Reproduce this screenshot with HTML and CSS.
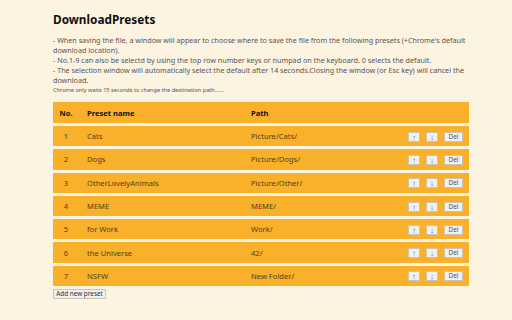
FILE: index.html
```html
<!DOCTYPE html>
<html>
<head>
<meta charset="utf-8">
<link rel="stylesheet" href="styles.css">
</head>
<body>
<main class="page">
  <h1 class="title">DownloadPresets</h1>
  <div class="notes">
    <p>- When saving the file, a window will appear to choose where to save the file from the following presets (+Chrome's default download location).</p>
    <p>- No.1-9 can also be selectd by using the top row number keys or numpad on the keyboard. 0 selects the default.</p>
    <p>- The selection window will automatically select the default after 14 seconds.Closing the window (or Esc key) will cancel the download.</p>
    <p class="small">Chrome only waits 15 seconds to change the destination path......</p>
  </div>
  <table class="presets">
    <thead>
      <tr><th class="c-no">No.</th><th class="c-name">Preset name</th><th class="c-path">Path</th><th class="c-act"></th></tr>
    </thead>
    <tbody>
      <tr><td class="c-no">1</td><td class="c-name">Cats</td><td class="c-path">Picture/Cats/</td><td class="c-act"><button class="btn arr">↑</button><button class="btn arr">↓</button><button class="btn del">Del</button></td></tr>
      <tr><td class="c-no">2</td><td class="c-name">Dogs</td><td class="c-path">Picture/Dogs/</td><td class="c-act"><button class="btn arr">↑</button><button class="btn arr">↓</button><button class="btn del">Del</button></td></tr>
      <tr><td class="c-no">3</td><td class="c-name">OtherLovelyAnimals</td><td class="c-path">Picture/Other/</td><td class="c-act"><button class="btn arr">↑</button><button class="btn arr">↓</button><button class="btn del">Del</button></td></tr>
      <tr><td class="c-no">4</td><td class="c-name">MEME</td><td class="c-path">MEME/</td><td class="c-act"><button class="btn arr">↑</button><button class="btn arr">↓</button><button class="btn del">Del</button></td></tr>
      <tr><td class="c-no">5</td><td class="c-name">for Work</td><td class="c-path">Work/</td><td class="c-act"><button class="btn arr">↑</button><button class="btn arr">↓</button><button class="btn del">Del</button></td></tr>
      <tr><td class="c-no">6</td><td class="c-name">the Universe</td><td class="c-path">42/</td><td class="c-act"><button class="btn arr">↑</button><button class="btn arr">↓</button><button class="btn del">Del</button></td></tr>
      <tr><td class="c-no">7</td><td class="c-name">NSFW</td><td class="c-path">New Folder/</td><td class="c-act"><button class="btn arr">↑</button><button class="btn arr">↓</button><button class="btn del">Del</button></td></tr>
    </tbody>
  </table>
  <button class="btn add">Add new preset</button>
</main>
</body>
</html>
```

FILE: styles.css
```css
html, body {
  margin: 0;
  padding: 0;
  background: #fdf3e1;
}
body {
  font-family: "Noto Sans", "Open Sans", sans-serif;
  color: #333;
}
.page {
  width: 416px;
  padding: 10px 0 0 53px;
}
.title {
  margin: 0;
  font-size: 11.8px;
  line-height: 18px;
  font-weight: 700;
  color: #111;
}
.notes {
  margin-top: 7px;
  color: #555;
}
.notes p {
  margin: 0;
  font-size: 7.2px;
  line-height: 10px;
}
.notes p.small {
  font-size: 5.6px;
  line-height: 10px;
}
.presets {
  margin-top: 4px;
  width: 416px;
  border-collapse: separate;
  border-spacing: 0 3px;
  font-size: 7.6px;
}
.presets th,
.presets td {
  background: #f9b02a;
  height: 20.3px;
  padding: 0;
  text-align: left;
  color: #4f3f1c;
  white-space: nowrap;
}
.presets th {
  font-weight: 700;
  color: #111;
  height: 21px;
}
.presets .c-no {
  width: 26px;
  text-align: center;
}
.presets .c-name {
  width: 164px;
  padding-left: 8px;
}
.presets .c-path {
  width: 150px;
}
.presets .c-act {
  text-align: right;
  padding-right: 6px;
}
.btn {
  font-family: "Noto Sans", "Open Sans", sans-serif;
  background: #f0f0f0;
  border: 1px solid #c9c3b8;
  border-radius: 1px;
  color: #555;
  padding: 0;
  margin: 0;
  height: 10px;
  font-size: 6.4px;
  line-height: 8px;
  vertical-align: middle;
}
.btn.arr {
  width: 12px;
  margin-left: 6px;
  font-size: 7.5px;
  color: #666;
}
.btn.del {
  width: 19px;
  margin-left: 6px;
}
.btn.add {
  display: block;
  width: 53px;
  height: 10px;
  font-size: 6.4px;
  color: #333;
  margin-top: 0;
}
```
